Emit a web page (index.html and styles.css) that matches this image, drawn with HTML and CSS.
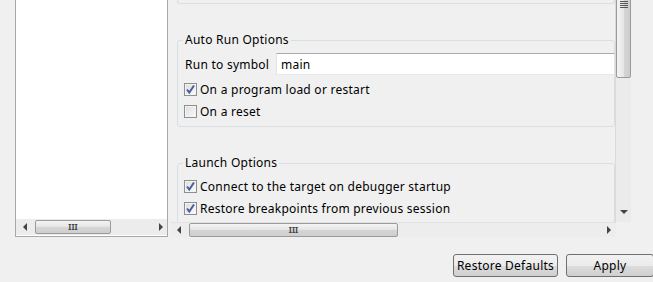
FILE: index.html
```html
<!DOCTYPE html>
<html lang="en">
<head>
    <meta charset="UTF-8">
    <meta name="viewport" content="width=device-width, initial-scale=1.0">
    <title>Debug Configuration</title>
    <link rel="stylesheet" href="styles.css">
</head>
<body>
    <div class="main">
        <div class="tree">
            <div class="tree-body"></div>
            <div class="hscroll tree-scroll">
                <span class="arrow-left"></span>
                <div class="track">
                    <div class="hthumb tree-thumb"><span class="grip">III</span></div>
                </div>
                <span class="arrow-right"></span>
            </div>
        </div>

        <div class="pane">
            <div class="pane-top">
                <div class="viewport">
                    <div class="group-tail"></div>

                    <fieldset class="group">
                        <legend>Auto Run Options</legend>
                        <div class="field-row">
                            <label class="field-label" for="symbol">Run to symbol</label>
                            <input class="text-input" id="symbol" type="text" value="main">
                        </div>
                        <div class="check-row">
                            <span class="checkbox checked">
                                <svg viewBox="0 0 11 11" width="11" height="11"><path d="M2 5.5 L4.3 8.5 L9 1.5" fill="none" stroke="#4a5e9a" stroke-width="2"/></svg>
                            </span>
                            <span>On a program load or restart</span>
                        </div>
                        <div class="check-row">
                            <span class="checkbox"></span>
                            <span>On a reset</span>
                        </div>
                    </fieldset>

                    <fieldset class="group launch">
                        <legend>Launch Options</legend>
                        <div class="check-row">
                            <span class="checkbox checked">
                                <svg viewBox="0 0 11 11" width="11" height="11"><path d="M2 5.5 L4.3 8.5 L9 1.5" fill="none" stroke="#4a5e9a" stroke-width="2"/></svg>
                            </span>
                            <span>Connect to the target on debugger startup</span>
                        </div>
                        <div class="check-row">
                            <span class="checkbox checked">
                                <svg viewBox="0 0 11 11" width="11" height="11"><path d="M2 5.5 L4.3 8.5 L9 1.5" fill="none" stroke="#4a5e9a" stroke-width="2"/></svg>
                            </span>
                            <span>Restore breakpoints from previous session</span>
                        </div>
                    </fieldset>
                </div>

                <div class="vscroll">
                    <div class="vthumb"><span class="vgrip"></span></div>
                    <div class="vtrack"></div>
                    <span class="arrow-down"></span>
                </div>
            </div>

            <div class="hscroll pane-scroll">
                <span class="arrow-left"></span>
                <div class="track">
                    <div class="hthumb pane-thumb"><span class="grip">III</span></div>
                </div>
                <span class="arrow-right"></span>
            </div>
        </div>
    </div>

    <div class="buttons">
        <button class="btn restore">Restore Defaults</button>
        <button class="btn apply">Apply</button>
    </div>
</body>
</html>
```

FILE: styles.css
```css
body {
    margin: 0;
    background-color: #f0f0f0;
    font-family: "Noto Sans", sans-serif;
    font-size: 12px;
    letter-spacing: 0.25px;
    color: #000;
    overflow: hidden;
}
.main {
    display: flex;
    height: 237px;
    padding-left: 15px;
}

/* left tree */
.tree {
    width: 151px;
    height: 236px;
    border: 1px solid #a5a8ad;
    border-top: none;
    background-color: #fff;
    display: flex;
    flex-direction: column;
}
.tree-body {
    flex: 1;
}

/* scrollbars */
.hscroll {
    display: flex;
    align-items: center;
    height: 16px;
    background-color: #ececec;
}
.tree-scroll {
    margin-bottom: 1px;
    padding: 0 4px 0 7px;
}
.track {
    flex: 1;
    display: flex;
    align-items: center;
    height: 16px;
}
.hthumb {
    height: 12px;
    border: 1px solid #9a9a9a;
    border-radius: 2px;
    background: linear-gradient(#f4f4f4, #e4e4e4 50%, #d5d5d5 51%, #cfcfcf);
    display: flex;
    align-items: center;
    justify-content: center;
}
.tree-thumb {
    width: 74px;
    margin-left: 8px;
}
.pane-thumb {
    width: 207px;
    margin-left: 8px;
}
.grip {
    font-size: 8px;
    line-height: 8px;
    font-weight: bold;
    color: #444;
    letter-spacing: 0;
}
.arrow-left {
    width: 0;
    height: 0;
    border-top: 4px solid transparent;
    border-bottom: 4px solid transparent;
    border-right: 4px solid #444;
}
.arrow-right {
    width: 0;
    height: 0;
    border-top: 4px solid transparent;
    border-bottom: 4px solid transparent;
    border-left: 4px solid #444;
}
.arrow-down {
    width: 0;
    height: 0;
    border-left: 4px solid transparent;
    border-right: 4px solid transparent;
    border-top: 4px solid #444;
    margin: 6px auto 8px;
}

/* right pane */
.pane {
    margin-left: 3px;
    width: 460px;
    display: flex;
    flex-direction: column;
}
.pane-top {
    display: flex;
    height: 222px;
}
.viewport {
    width: 445px;
    overflow: hidden;
    padding-left: 6px;
    box-sizing: border-box;
}
.pane-scroll {
    width: 445px;
    height: 15px;
    padding: 0 5px 0 6px;
    box-sizing: border-box;
    background-color: #ededed;
    border-top: 1px solid #e2e2e2;
}
.vscroll {
    width: 15px;
    display: flex;
    flex-direction: column;
    overflow: hidden;
    background-color: #ebebeb;
    border-left: 1px solid #dadada;
}
.vthumb {
    flex: none;
    height: 146px;
    margin-top: -70px;
    border: 1px solid #9a9a9a;
    border-radius: 2px;
    background: linear-gradient(to right, #f4f4f4, #e6e6e6 50%, #d6d6d6 51%, #cdcdcd);
    display: flex;
    align-items: center;
    justify-content: center;
}
.vgrip {
    width: 8px;
    height: 7px;
    background: repeating-linear-gradient(#555 0, #555 1px, transparent 1px, transparent 2px);
}
.vtrack {
    flex: 1;
}

/* groups */
.group-tail {
    height: 3px;
    border: 1px solid #d5dfe5;
    border-top: none;
    border-radius: 0 0 3px 3px;
}
.group {
    margin: 28px 0 0;
    padding: 0 0 4px 5px;
    border: 1px solid #d5dfe5;
    border-radius: 3px;
    min-width: 0;
}
.group legend {
    padding: 0 2px;
    line-height: 16px;
    height: 16px;
}
.field-row {
    display: flex;
    align-items: center;
    margin-top: 5px;
    height: 22px;
    margin-right: -1px;
}
.field-label {
    width: 91px;
    padding-left: 2px;
}
.text-input {
    flex: 1;
    height: 22px;
    box-sizing: border-box;
    border: 1px solid #e2e3ea;
    border-top-color: #abadb3;
    border-bottom-color: #e3e9ef;
    background-color: #fff;
    font: inherit;
    letter-spacing: inherit;
    padding: 0 4px;
    outline: none;
}
.field-row + .check-row {
    margin-top: 3px;
}
.launch .check-row:first-of-type {
    margin-top: 4px;
}
.check-row {
    display: flex;
    align-items: center;
    gap: 3px;
    height: 22px;
    padding-left: 1px;
}
.checkbox {
    width: 11px;
    height: 11px;
    border: 1px solid #8e8f8f;
    background: linear-gradient(135deg, #dcdcdc, #fbfbfb);
    box-shadow: inset 0 0 0 1px #f4f4f4;
    display: flex;
}

/* buttons */
.buttons {
    display: flex;
    gap: 8px;
    margin-top: 17px;
    padding-left: 453px;
}
.btn {
    height: 23px;
    border: 1px solid #707070;
    border-radius: 3px;
    background: linear-gradient(#f2f2f2, #ebebeb 50%, #dddddd 51%, #cfcfcf);
    font: inherit;
    letter-spacing: inherit;
    color: #000;
    padding: 0;
    flex: none;
}
.restore {
    width: 105px;
}
.apply {
    width: 88px;
}
```
